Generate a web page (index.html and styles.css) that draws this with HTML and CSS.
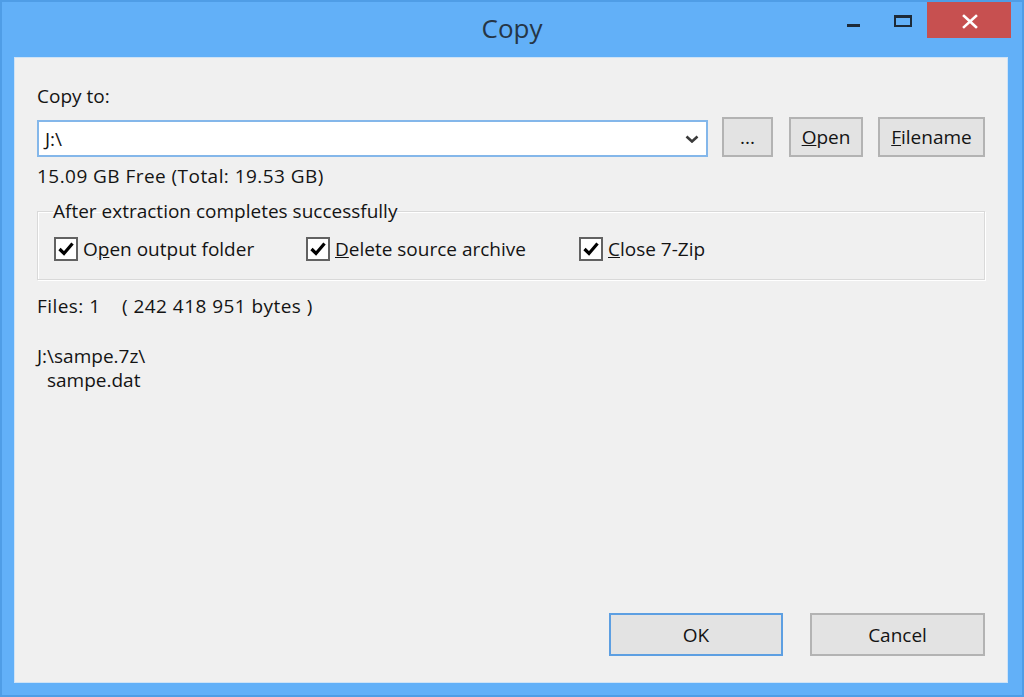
FILE: index.html
```html
<!DOCTYPE html>
<html lang="en">
<head>
<meta charset="utf-8">
<title>Copy</title>
<link rel="stylesheet" href="styles.css">
</head>
<body>
<div class="window">
  <header class="titlebar">
    <div class="tb-left"></div>
    <div class="title">Copy</div>
    <div class="caption-buttons">
      <button class="cap cap-min" aria-label="Minimize">
        <svg width="47" height="36" viewBox="0 0 47 36"><rect x="17" y="22" width="13" height="3" fill="#1d2a38"/></svg>
      </button>
      <button class="cap cap-max" aria-label="Maximize">
        <svg width="50" height="36" viewBox="0 0 50 36"><rect x="18" y="14" width="16" height="10" fill="none" stroke="#1d2a38" stroke-width="2"/><rect x="17" y="13" width="18" height="3" fill="#1d2a38"/></svg>
      </button>
      <button class="cap cap-close" aria-label="Close">
        <svg width="84" height="36" viewBox="0 0 84 36"><path d="M37 14 L49 25 M49 14 L37 25" stroke="#fff" stroke-width="2.6" stroke-linecap="square"/></svg>
      </button>
    </div>
  </header>
  <main class="client">
    <div class="label">Copy to:</div>
    <div class="path-row">
      <div class="combo">
        <span class="combo-text">J:\</span>
        <svg class="chev" width="14" height="8" viewBox="0 0 14 8"><path d="M1.5 1.5 L7 6.5 L12.5 1.5" fill="none" stroke="#3a3a3a" stroke-width="2.6"/></svg>
      </div>
      <button class="btn btn-dots">...</button>
      <button class="btn btn-open"><u>O</u>pen</button>
      <button class="btn btn-filename"><u>F</u>ilename</button>
    </div>
    <div class="free">15.09 GB Free (Total: 19.53 GB)</div>
    <fieldset class="group">
      <legend>After extraction completes successfully</legend>
      <div class="checks">
        <label class="check"><span class="box"><svg width="20" height="20" viewBox="0 0 20 20"><path d="M3.5 10 L8 14.5 L16.5 4.5" fill="none" stroke="#000" stroke-width="3.2"/></svg></span>O<u>p</u>en output folder</label>
        <label class="check"><span class="box"><svg width="20" height="20" viewBox="0 0 20 20"><path d="M3.5 10 L8 14.5 L16.5 4.5" fill="none" stroke="#000" stroke-width="3.2"/></svg></span><u>D</u>elete source archive</label>
        <label class="check"><span class="box"><svg width="20" height="20" viewBox="0 0 20 20"><path d="M3.5 10 L8 14.5 L16.5 4.5" fill="none" stroke="#000" stroke-width="3.2"/></svg></span><u>C</u>lose 7-Zip</label>
      </div>
    </fieldset>
    <div class="files">Files: 1&nbsp;&nbsp;&nbsp; ( 242 418 951 bytes )</div>
    <div class="list">
      <div>J:\sampe.7z\</div>
      <div class="indent">sampe.dat</div>
    </div>
    <div class="actions">
      <button class="btn btn-big btn-default">OK</button>
      <button class="btn btn-big">Cancel</button>
    </div>
  </main>
</div>
</body>
</html>
```
FILE: styles.css
```css
* { box-sizing: border-box; }
html, body { margin: 0; padding: 0; }
body {
  width: 1024px;
  height: 697px;
  overflow: hidden;
  font-family: "Open Sans", "Noto Sans", "DejaVu Sans", sans-serif;
  color: #141414;
}
.window {
  width: 1024px;
  height: 697px;
  background: #62b0f8;
  border: 2px solid #4f9de6;
  display: flex;
  flex-direction: column;
  padding: 0 14px 12px 12px;
}
.titlebar {
  height: 55px;
  display: grid;
  grid-template-columns: 1fr auto 1fr;
  margin: 0 -14px 0 -12px;
  flex: none;
}
.title {
  align-self: center;
  font-size: 26px;
  color: #263646;
  line-height: 32px;
  padding-bottom: 4px;
}
.caption-buttons {
  justify-self: end;
  display: flex;
  align-items: flex-start;
  margin-right: 11px;
}
.cap {
  border: 0;
  padding: 0;
  margin: 0;
  background: transparent;
  display: block;
  height: 36px;
}
.cap svg { display: block; }
.cap-min { width: 47px; }
.cap-max { width: 50px; }
.cap-close { width: 84px; background: #c75050; }

.client {
  flex: 1;
  background: #f0f0f0;
  border: 1px solid #cfe3f6;
  padding: 26px 22px 26px 22px;
  display: flex;
  flex-direction: column;
  font-size: 19px;
}
.label { line-height: 24px; }
.path-row {
  display: flex;
  align-items: flex-end;
  height: 40px;
  margin-top: 9px;
}
.combo {
  flex: 1;
  height: 37px;
  background: #fff;
  border: 2px solid #84b7ea;
  display: flex;
  align-items: center;
  padding: 0 7px 0 6px;
}
.combo-text { flex: 1; line-height: 24px; }
.chev { display: block; }
.btn {
  font-family: inherit;
  font-size: 19px;
  color: #141414;
  background: #e3e3e3;
  border: 2px solid #b3b3b3;
  margin: 0;
  padding: 0;
  height: 40px;
  line-height: 24px;
}
.btn-dots { width: 51px; margin-left: 14px; }
.btn-open { width: 74px; margin-left: 16px; }
.btn-filename { width: 107px; margin-left: 15px; }
.free { line-height: 24px; margin-top: 7px; letter-spacing: 0.45px; }

.group {
  margin: 11px 0 0 0;
  border: 1px solid #d9d9d9;
  box-shadow: inset 1px 1px 0 #fff, 1px 1px 0 #fff;
  padding: 0 16px 18px 16px;
  min-width: 0;
}
.group legend {
  padding: 0;
  line-height: 24px;
  margin-left: -1px;
}
.checks {
  display: grid;
  grid-template-columns: 252px 273px auto;
  margin-top: 14px;
}
.check {
  display: flex;
  align-items: center;
  height: 24px;
  line-height: 24px;
}
.box {
  width: 24px;
  height: 24px;
  border: 2px solid #626262;
  background: #fff;
  margin-right: 5px;
  display: flex;
  align-items: center;
  justify-content: center;
  flex: none;
}
.box svg { display: block; }
.files { line-height: 24px; margin-top: 14px; letter-spacing: 0.45px; }
.list { margin-top: 26px; line-height: 24px; }
.indent { padding-left: 10px; }
.actions {
  margin-top: auto;
  display: flex;
  justify-content: flex-end;
  gap: 27px;
}
.btn-big { width: 175px; height: 43px; }
.btn-default {
  width: 174px;
  border: 2px solid #5d9fe2;
}
```
